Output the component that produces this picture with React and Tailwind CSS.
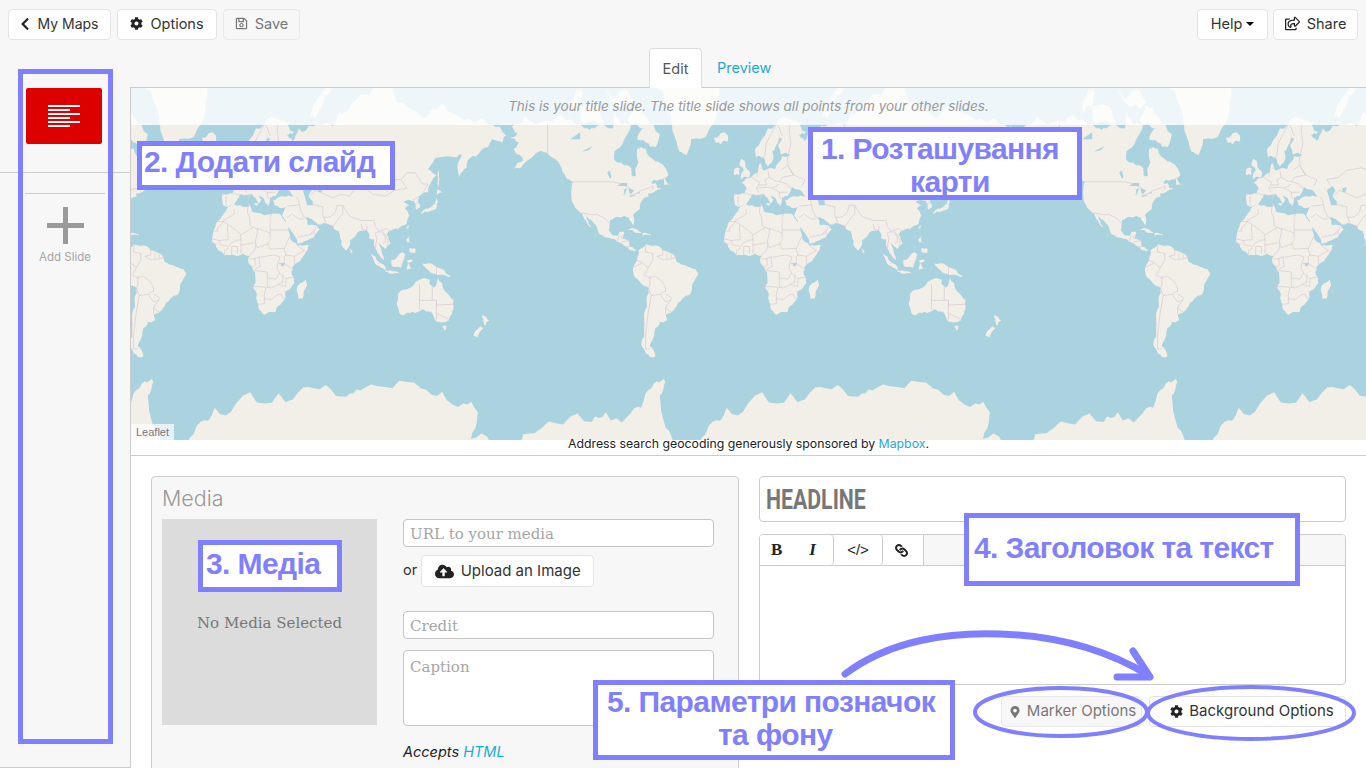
import React from "react";
import {
    FaChevronLeft,
    FaCog,
    FaRegSave,
    FaRegShareSquare,
    FaCloudUploadAlt,
    FaMapMarkerAlt,
    FaLink,
} from "react-icons/fa";

// lon/lat outlines, projected to web mercator below
const LAND = [
    [[-168,66],[-162,67],[-166,68.5],[-157,71],[-141,70],[-128,70],[-115,68],[-108,68],[-95,68],[-94,72],[-88,69],[-82,69],[-87,65],[-94,61],[-94,58],[-88,56.5],[-82,55],[-82,52],[-79,51.5],[-79,55],[-77,57],[-78,62],[-72,62],[-66,58],[-62,57],[-56,52],[-60,50],[-66,50],[-70,47],[-65,48.5],[-64,46],[-61,46],[-66,44],[-70,43.5],[-70,41.5],[-74,40.5],[-76,37],[-76,35],[-81,31],[-80,27],[-80.5,25],[-82,27],[-84,30],[-89,30],[-94,29.5],[-97,28],[-98,22],[-95,18.5],[-91,18.5],[-90,21],[-87,21],[-88,16],[-84,15.5],[-83.5,11],[-80,9],[-77.5,8.5],[-80,7.5],[-83,8.5],[-86,11],[-91,14],[-95,16],[-100,17],[-105,20],[-106,23],[-112,29],[-114.5,31.5],[-112,26],[-110,23],[-113,26],[-117,32.5],[-121,35],[-124,40],[-124,47],[-123,49],[-128,51],[-131,55],[-135,58],[-140,60],[-147,61],[-152,59],[-158,56.5],[-165,54.5],[-158,58],[-162,60],[-165,62],[-161,64]],
    [[-77,8],[-72,12],[-68,11],[-62,10.5],[-60,8],[-52,5],[-50,0],[-44,-2.5],[-37,-5],[-35,-8],[-39,-15],[-40,-21],[-45,-24],[-48.5,-27],[-52,-32],[-58,-35],[-57,-38],[-62,-39],[-65,-42],[-66,-46],[-69,-51],[-65,-55],[-72,-54],[-75,-50],[-73,-42],[-73,-37],[-71,-30],[-70,-18],[-76,-14],[-81,-6],[-80,-2],[-78,2]],
    [[-6,35.8],[3,37],[10,37.3],[11,33.5],[15,32.5],[20,31],[25,32],[32,31],[34,28],[37,21],[39,15],[43,11.5],[51,12],[48,5],[40,-3],[39,-8],[41,-15],[35,-20],[35,-24],[32.5,-27],[28,-33],[20,-34.8],[18,-33],[15,-27],[12,-18],[13.5,-10],[9,-1],[9.5,4],[5,6],[-4,5],[-8,4.5],[-13,9],[-17,14.5],[-16,20],[-13,27.5],[-9.5,31]],
    [[-9,37],[-9.5,43],[-2,43.5],[-1,46],[-4.5,48.5],[2,51],[7,53.5],[8.5,57],[11,54],[19,54.5],[21,57],[24,59.5],[30,60],[23,60],[21,63],[25,65.5],[22,65.5],[17,61],[18,59],[14,55.5],[11,59],[5.5,59],[5,62],[14,68],[25,71],[31,70],[41,67],[35,66.5],[40,64.5],[44,68],[54,68.5],[60,69],[68,68.5],[73,72],[80,73],[90,75.5],[104,77.5],[113,74],[130,71],[140,72.5],[160,70],[170,70],[180,69],[180,65],[177,62.5],[170,60],[163,58],[162,55],[156.5,51],[156,57],[163,62],[155,59],[142,59],[135,54.5],[141,52],[135,44],[130,42.5],[128,40],[129.5,36],[126.5,34.5],[125,39.5],[121,40],[118,39],[122,37],[119,35],[122,31],[120,26],[114,22.5],[108,21.5],[106,19],[109,13],[105,9],[100.5,13.5],[103,5],[104,1.5],[100,6],[98,10],[97,16],[94,16],[92,22],[87,21.5],[80,15],[80,12],[77.5,8],[73,17],[72.5,21],[67,25],[57,25.5],[56,27],[50,30],[48,30],[51,25],[56,25],[59,22.5],[55,17],[45,13],[43,13],[39,21],[35,28],[32.5,31],[35,36],[27,37],[26,40],[29,41],[36,42],[41,41.5],[37,45],[31,46.5],[28,42],[24,40.5],[23,36.5],[19.5,41],[13,45.5],[18,40],[16,38],[11,43],[3.5,43],[0,39],[-2,36.7],[-5.5,36]],
    [[-180,65],[-173,64],[-170,66],[-180,69]],
    // greenland and arctic
    [[-73,78],[-60,76],[-54,70],[-51,65],[-48,61],[-43,60],[-40,65],[-27,68],[-22,71],[-20,76],[-20,81],[-35,83.5],[-60,82]],
    [[-80,73.5],[-72,71],[-62,66.5],[-65,62.5],[-72,64],[-78,65],[-73,68],[-85,70]],
    [[-118,73],[-105,73],[-101,69.5],[-115,69],[-118,70]],
    [[-125,74],[-116,76],[-118,73],[-125,71.5]],
    [[-92,81],[-70,83],[-62,82],[-78,78],[-88,76.5]],
    [[-100,76],[-90,76],[-80,74],[-95,74]],
    [[-59,51],[-53,47],[-59,47.5]],
    [[-24,65.5],[-14,66],[-14,64.5],[-19,63.5],[-23,64]],
    [[11,79],[20,80],[27,78],[16,76.5]],
    [[52,71],[56,74],[68,77],[58,72],[56,70.5]],
    // caribbean
    [[-85,22],[-80,23],[-74,20],[-78,20],[-82,22]],
    [[-74,19.8],[-69,19.5],[-68.5,18.3],[-74,18]],
    // british isles
    [[-5,50],[1,51],[1.5,53],[-2,56],[-2,57.5],[-5,58.5],[-6,56],[-3,54],[-5,52]],
    [[-10,52],[-6,52],[-6,55],[-10,54]],
    [[9,41],[9.5,43],[8.5,39]],
    [[12.5,38],[15.5,38],[15,36.7]],
    // asia islands
    [[130,32],[131,34],[136,35.5],[140,38],[141,41],[142,39],[141,35.5],[136,33.5]],
    [[140,42],[145,43.5],[142,45.5]],
    [[142,46],[143,50],[142.5,54],[142,50]],
    [[120,22],[121.5,24],[122,25],[120,24]],
    [[120,16],[122,18.5],[122,14],[124,13],[120,14]],
    [[122,10],[126,9.5],[126,6],[122,7]],
    [[95,5.5],[98,4],[104,-2],[106,-6],[102,-4],[97,1]],
    [[105,-6.5],[112,-6.5],[115,-8],[108,-8]],
    [[109,1],[113,3],[117,7],[119,5],[117.5,1],[116,-4],[110,-3]],
    [[120,1],[125,1.5],[121,-1],[123,-5],[120,-5.5]],
    [[131,-1],[138,-1.5],[145,-5],[151,-10.5],[143,-9],[138,-8],[133,-4]],
    [[80,9.5],[82,7.5],[80.5,6]],
    // oceania
    [[114,-22],[122,-18],[126,-14],[130,-12],[136,-12],[136,-15],[140,-17.5],[142,-11],[146,-19],[153,-26],[153,-31],[150,-37.5],[146,-39],[140,-38],[137,-33],[131,-31.5],[124,-33],[118,-35],[115,-34]],
    [[145,-41],[148,-41],[147,-43.5]],
    [[173,-35],[178,-38],[175,-41],[174,-38]],
    [[172,-41],[174,-42],[170,-46.5],[167,-46]],
    [[44,-16],[49,-12],[50,-16],[47,-25],[44,-25],[43,-21]],
    // antarctica
    [[-180,-78],[-150,-76],[-130,-74.5],[-110,-74],[-100,-72],[-85,-73],[-75,-71],[-68,-66],[-60,-63.5],[-58,-64],[-62,-68],[-60,-73],[-50,-78],[-35,-78],[-25,-74],[-15,-71],[0,-70],[20,-70],[40,-69],[55,-66],[70,-68],[80,-67.5],[90,-66],[110,-66],[130,-66],[145,-67],[160,-70],[170,-72],[165,-77],[180,-78],[180,-86],[-180,-86]],
];

const LAKES = [
    [[-92,47],[-85,47],[-85,48.5],[-89,48.5]],
    [[-87.5,42],[-86,44],[-85,46],[-87,45.5]],
    [[-84,46],[-80,45],[-82,43],[-83.5,44]],
    [[-83,42],[-79,42.8],[-79,42.4],[-82,41.5]],
    [[-80,43.3],[-76,44],[-76,43.3]],
    [[-125,65],[-118,67],[-118,65]],
    [[-117,61],[-109,63],[-112,61.5]],
    [[-99,53],[-97,54],[-96,51],[-97,50.5]],
    [[47,45],[51,47],[53,45],[51,42],[54,39],[54,37],[50,37],[49,40]],
    [[58,46],[61,46.5],[60,44],[58,44]],
    [[31.5,-1],[34,-0.5],[34,-2.5],[32,-3]],
    [[104,52],[108,54],[110,55.5],[106,52]],
];

const BORDERS = [
    [[-123,49],[-95,49],[-89,48],[-83,46],[-83,42],[-79,43],[-75,45],[-70,46],[-67,47],[-67,45]],
    [[-141,70],[-141,60],[-135,58]],
    [[-117,32.5],[-108,31.5],[-106,31.7],[-101,29.5],[-97,26]],
    [[-92,14.5],[-91,17.5],[-89,18],[-88.5,16]],
    [[-89,14],[-83,15]],
    [[-86,11],[-83.5,11]],
    [[-1.5,35],[-1,32],[-8.7,28],[-8.7,27.3],[-13,27.5]],
    [[-8.7,27.3],[-4.8,25],[1,21],[3.3,19],[4,19],[12,23.5]],
    [[-13,21.3],[-17,21.3]],
    [[-13,21.3],[-13,23],[-8.7,27.3]],
    [[-6,25],[-5.5,15.5],[-12,15],[-16.5,16]],
    [[8.5,37],[8,33],[9.5,30],[10,24.5],[12,23.5],[15,23],[24,20],[24,30],[25,32]],
    [[24,22],[37,22]],
    [[15,23],[15,20],[13.5,14],[14,12.5],[15,10],[24,13]],
    [[24,20],[24,15],[22,13],[24,9],[34,9.5],[36,14],[38,18]],
    [[3.3,19],[3.5,15.5],[0,15],[-3,13.5],[-5,11],[-11,12],[-12,15]],
    [[3.5,6],[3.5,15.5]],
    [[3.5,11.7],[13.5,13.5]],
    [[9,4.5],[13,8],[14,12.5]],
    [[-3,5],[-3,11],[1,11],[1,6]],
    [[-8,4.5],[-8,8],[-5,10]],
    [[-13,12.5],[-16.5,12.5]],
    [[13,2],[16,3.5],[18,3.5],[27,5],[31,3.5],[29.5,-1],[29,-4.5],[30.5,-8],[28,-12],[22,-11],[22,-7],[13,-6]],
    [[9.5,2.2],[13,2.3],[14,-2],[11,-4]],
    [[16,3.5],[17,-3],[13,-5]],
    [[12,-17],[23,-17.5],[25,-18]],
    [[22,-11],[22,-16],[23,-17.5]],
    [[20,-22],[20,-28],[16.5,-28.5]],
    [[20,-22],[21,-18]],
    [[20,-25],[25,-25.5],[29,-22.5],[32,-22],[33,-25]],
    [[25,-18],[30,-15.5],[33,-14],[33,-9.5],[30.5,-8]],
    [[34,-1],[37.5,-3.5],[39,-4.5]],
    [[34,-1],[30,-1]],
    [[40.5,-10.5],[35,-11.5],[33,-9.5]],
    [[35,-11.5],[35,-17],[30,-15.5]],
    [[41,-1.5],[41,4],[35,5],[34,4],[34,-1]],
    [[41,4],[48,8],[43,11.5]],
    [[35,5],[34,9.5]],
    [[-72,11.5],[-72,7],[-67,6],[-67,1.5],[-70,-4]],
    [[-78.8,1.4],[-75,0],[-70,-4]],
    [[-80,-3.5],[-75,-1]],
    [[-70,-4],[-73,-9],[-70,-11]],
    [[-69,-11],[-69,-16],[-70,-18]],
    [[-70,-18],[-68,-23],[-70,-33],[-72,-45],[-72,-52],[-69,-52]],
    [[-70,-11],[-65,-10],[-60,-14],[-58,-18],[-58,-20]],
    [[-58,-20],[-62,-22],[-58,-27],[-54.5,-26],[-54,-24],[-58,-22]],
    [[-68,-23],[-62,-22]],
    [[-58,-34],[-58,-30.5],[-53.5,-33.5]],
    [[-54.5,-26],[-58,-30.5]],
    [[-60,8],[-60,5],[-64,4],[-60,1.5],[-52,2.5],[-51.5,4]],
    [[-57,6],[-57,2]],
    [[-54,5.5],[-54,2.3]],
    [[-2,43.3],[3,42.5]],
    [[-7,42],[-7,37]],
    [[2.5,51],[6,49.5],[8,49],[7.5,47.5],[6,46],[7.5,44]],
    [[14,54],[15,51],[19,49.5],[22.5,49]],
    [[8.5,55],[10,54.8]],
    [[7.5,47.5],[13,47.5],[12,50],[15,51]],
    [[7,46],[13.5,46.5],[17,46],[22,44],[22.5,41],[26,41]],
    [[24,51],[22.5,49],[27,48],[30,46]],
    [[24,51],[32,52],[28,56],[23,54]],
    [[28,60],[28,56],[32,52],[40,50],[38,47]],
    [[28,60],[30,63],[29,69],[26,70]],
    [[11.5,59],[13,64],[20,69]],
    [[24,66],[21,69]],
    [[22,44],[28,44]],
    [[17,46],[22,48]],
    [[6,51],[7,53]],
    [[36,36.5],[42,37],[44.5,37.5],[44,40],[42,41.5]],
    [[44.5,37.5],[46,33],[48,30]],
    [[48,29],[44,29],[39,32],[36,29.5]],
    [[43,17],[52,19],[55,22]],
    [[52,19],[55,20],[56,24]],
    [[61,25],[63,27],[61,31],[61,36],[54,37.5]],
    [[61,30],[66,30],[70,33],[71,37],[75,37]],
    [[52,42],[56,45],[62,43],[68,41],[74,43],[80,42],[87,49]],
    [[50,47],[47,50],[55,51],[61,54],[71,55],[77,54],[87,49]],
    [[87,49],[98,52],[107,50],[116,50],[120,46],[112,45],[105,42],[96,43],[91,46],[87,49]],
    [[116,50],[120,53],[126,53],[131,48],[135,48],[131,43]],
    [[124.5,40],[130.5,42.5]],
    [[126,38],[128.5,38.5]],
    [[75,37],[79,32],[81,30],[88,28],[97,28],[98,24],[101,21],[106,23],[108,21.5]],
    [[68,24],[71,28],[75,32],[75,37]],
    [[88,26],[89,22],[92,22],[92,25]],
    [[98,10],[99,16],[98,20],[101,21]],
    [[101,21],[105,18],[105,14],[103,13]],
    [[102,22],[105,19],[107,15],[106,11]],
    [[129,-15],[129,-31.5]],
    [[138,-16.5],[138,-26],[129,-26]],
    [[141,-26],[141,-38]],
    [[138,-26],[141,-26],[141,-29],[153,-28.5]],
    [[141,-34],[150,-37.5]],
    [[141,-2.5],[141,-9]],
];

// small seeded wobble so the coasts aren't straight segments
let seed = 7;
function rand() {
    seed = (seed * 16807) % 2147483647;
    return seed / 2147483647 - 0.5;
}

function roughen(points, rounds) {
    let out = points;
    for (let r = 0; r < rounds; r++) {
        const next = [];
        out.forEach((a, i) => {
            const b = out[(i + 1) % out.length];
            next.push(a);
            if (Math.abs(a[0]) === 180 && Math.abs(b[0]) === 180) return;
            const dx = b[0] - a[0];
            const dy = b[1] - a[1];
            const k = rand() * 0.3;
            next.push([(a[0] + b[0]) / 2 - dy * k, (a[1] + b[1]) / 2 + dx * k]);
        });
        out = next;
    }
    return out;
}

function toPath(points, close) {
    const d = points.map(([lon, lat], i) => {
        const x = 492 + ((lon + 180) / 360) * 512;
        const y = 262 - 81.487 * Math.log(Math.tan(Math.PI / 4 + (lat * Math.PI) / 360));
        return `${i ? "L" : "M"}${x.toFixed(1)} ${y.toFixed(1)}`;
    });
    return d.join("") + (close ? "Z" : "");
}

const landPath = LAND.map((p) => toPath(roughen(p, 2), true)).join("");
const lakePath = LAKES.map((p) => toPath(p, true)).join("");
const borderPath = BORDERS.map((p) => toPath(p, false)).join("");

function WorldMap() {
    return (
        <svg viewBox="131 88 1235 352" className="block w-full h-full bg-[#abd2df]">
            <defs>
                <g id="world">
                    <path d={landPath} fill="#f2efe9" />
                    <path d={lakePath} fill="#abd2df" />
                    <path d={borderPath} fill="none" stroke="#d3c2d0" strokeWidth="0.6" />
                </g>
            </defs>
            <use href="#world" x="-512" />
            <use href="#world" />
            <use href="#world" x="512" />
        </svg>
    );
}

function TopButton({ icon, label, disabled, className, children }) {
    return (
        <button
            className={`h-[31px] pb-[2px] flex items-center justify-center gap-[7px] rounded border text-[14.5px] ${className} ${
                disabled
                    ? "border-[#e9e9e9] bg-[#f7f7f7] text-[#777]"
                    : "border-[#e4e4e4] bg-white text-[#333]"
            }`}
        >
            {icon}
            {label}
            {children}
        </button>
    );
}

function Field({ placeholder, className }) {
    return (
        <div
            className={`bg-white border border-[#c4c4c4] rounded px-[6px] font-['DejaVu_Serif',serif] text-[15px] text-[#a5a5a5] ${className}`}
        >
            {placeholder}
        </div>
    );
}

function Callout({ className, children }) {
    return (
        <div
            className={`absolute border-[5px] border-[#8080ff] bg-white text-[#8080ff] font-['Liberation_Sans',sans-serif] font-bold text-left text-[30px] tracking-[-0.6px] whitespace-nowrap ${className}`}
        >
            {children}
        </div>
    );
}

export default function App() {
    return (
        <div className="relative w-[1366px] h-[768px] overflow-hidden bg-[#f7f7f7] font-['Inter',sans-serif] text-[#333]">
            {/* Toolbar */}
            <div className="h-[48px] pt-[9px] px-2 flex justify-between">
                <div className="flex gap-[6px]">
                    <TopButton className="w-[103px] !gap-[6px] !text-[14px] pr-[3px]" icon={<FaChevronLeft className="text-[14px] text-[#222]" />} label="My Maps" />
                    <TopButton className="w-[100px]" icon={<FaCog className="text-[13px] text-[#222]" />} label="Options" />
                    <TopButton className="w-[77px]" icon={<FaRegSave className="text-[13px]" />} label="Save" disabled />
                </div>
                <div className="flex gap-[5px]">
                    <TopButton className="w-[71px] !gap-[4px]" label="Help">
                        <span className="border-x-[4px] border-x-transparent border-t-[4px] border-t-black" />
                    </TopButton>
                    <TopButton className="w-[85px]" icon={<FaRegShareSquare className="text-[15px] text-[#222]" />} label="Share" />
                </div>
            </div>

            {/* Tabs */}
            <div className="h-[40px] ml-[130px] pl-[519px] flex text-[14.5px] border-b border-[#cccccc]">
                <div className="w-[53px] h-[40px] flex items-center justify-center bg-white border border-b-0 border-[#dddddd] rounded-t text-[#555]">
                    Edit
                </div>
                <div className="ml-[15px] h-[39px] flex items-center text-[#1fa9cf]">Preview</div>
            </div>

            <div className="flex h-[680px]">
                {/* Slide list */}
                <aside className="w-[131px] shrink-0 border-r border-b border-[#cccccc] flex flex-col">
                    <div className="h-[85px] border-b border-[#cccccc] pl-[26px]">
                        <div className="w-[76px] h-[56px] bg-[#dd0000] rounded-[2px] flex flex-col items-start justify-center pl-[22px] gap-[2.5px]">
                            <span className="w-[32px] h-[1.5px] bg-white" />
                            <span className="w-[22px] h-[1.5px] bg-white" />
                            <span className="w-[32px] h-[1.5px] bg-white" />
                            <span className="w-[22px] h-[1.5px] bg-white" />
                            <span className="w-[32px] h-[1.5px] bg-white" />
                            <span className="w-[22px] h-[1.5px] bg-white" />
                        </div>
                    </div>
                    <div className="mt-[20px] mx-[25px] border-t border-[#cccccc] flex flex-col items-center pt-[13px]">
                        <svg width="37" height="37" viewBox="0 0 37 37">
                            <rect x="16" y="0" width="5" height="37" fill="#9a9a9a" />
                            <rect x="0" y="16" width="37" height="5" fill="#9a9a9a" />
                        </svg>
                        <span className="mt-[5px] text-[11.5px] text-[#a5a5a5]">Add Slide</span>
                    </div>
                </aside>

                <main className="flex-1 min-w-0 bg-white flex flex-col">
                    {/* Map */}
                    <div className="relative h-[352px] shrink-0">
                        <WorldMap />
                        <div className="absolute top-0 inset-x-0 h-[37px] bg-white/80 flex items-center justify-center italic text-[13.5px] text-[#999]">
                            This is your title slide. The title slide shows all points from your other slides.
                        </div>
                        <div className="absolute left-0 bottom-0 h-[16px] px-[5px] bg-white/70 text-[11px] leading-[16px] text-[#777] font-['Liberation_Sans',sans-serif]">
                            Leaflet
                        </div>
                    </div>
                    <div className="relative h-[16px] shrink-0 border-b border-[#cccccc] text-center text-[12.3px] leading-[8px] text-[#222]">
                        Address search geocoding generously sponsored by <span className="text-[#1fa9cf]">Mapbox</span>.
                    </div>

                    {/* Editor */}
                    <div className="flex-1 flex pl-[20px] pr-[20px] pt-[20px] gap-[20px] items-start">
                        <section className="w-[588px] h-[320px] shrink-0 border border-[#cccccc] rounded bg-[#f7f7f7] px-[10px]">
                            <h2 className="h-[42px] pt-[5px] text-[21.5px] font-light text-[#999]">Media</h2>
                            <div className="flex">
                                <div className="w-[215px] h-[206px] bg-[#dcdcdc] pt-[93px] text-center font-['DejaVu_Serif',serif] text-[15px] text-[#777]">
                                    No Media Selected
                                </div>
                                <div className="ml-[26px] w-[311px] flex flex-col">
                                    <Field placeholder="URL to your media" className="h-[28px] leading-[28px]" />
                                    <div className="mt-[8px] flex items-center gap-[4px] text-[14.5px]">
                                        <span className="-mt-[2px]">or</span>
                                        <button className="h-[32px] w-[173px] flex items-center justify-center gap-[7px] bg-white border border-[#e4e4e4] rounded text-[15px] text-[#333]">
                                            <FaCloudUploadAlt className="text-[19px] text-[#222]" />
                                            Upload an Image
                                        </button>
                                    </div>
                                    <Field placeholder="Credit" className="mt-[24px] h-[28px] leading-[28px]" />
                                    <Field placeholder="Caption" className="mt-[11px] h-[76px] pt-[5px]" />
                                    <p className="mt-[15px] italic text-[14.5px] text-[#222]">
                                        Accepts <span className="text-[#1fa9cf]">HTML</span>
                                    </p>
                                </div>
                            </div>
                        </section>

                        <section className="flex-1 min-w-0 flex flex-col">
                            <div className="h-[46px] border border-[#cccccc] rounded bg-white pl-[6px] pt-[2px] flex items-center">
                                <span className="origin-left scale-x-[0.76] font-['Roboto',sans-serif] font-bold text-[28px] text-[#777]">
                                    HEADLINE
                                </span>
                            </div>
                            <div className="mt-[12px] h-[151px] border border-[#cccccc] rounded bg-white overflow-hidden">
                                <div className="h-[31px] bg-[#f7f7f7] border-b border-[#cccccc] flex text-[#222]">
                                    <div className="w-[74px] bg-white border-r border-[#cccccc] rounded-r flex items-center font-['Liberation_Serif',serif] text-[17px]">
                                        <b className="ml-[11px]">B</b>
                                        <i className="ml-[27px] font-bold">I</i>
                                    </div>
                                    <div className="w-[49px] bg-white border-r border-[#cccccc] rounded-r flex items-center justify-center font-['Liberation_Sans',sans-serif] text-[15px]">
                                        {"</>"}
                                    </div>
                                    <div className="w-[41px] bg-white border-r border-[#cccccc] flex items-center justify-center pr-[3px]">
                                        <FaLink className="text-[13px] rotate-90" />
                                    </div>
                                </div>
                            </div>
                            <div className="mt-[11px] flex justify-end gap-[7px]">
                                <button className="h-[31px] w-[141px] pl-[2px] flex items-center justify-center gap-[6px] border border-[#e9e9e9] rounded bg-[#f7f7f7] text-[15px] text-[#777]">
                                    <FaMapMarkerAlt className="text-[12px]" />
                                    Marker Options
                                </button>
                                <button className="h-[31px] w-[197px] pl-[9px] flex items-center justify-center gap-[6px] border border-[#e4e4e4] rounded bg-white text-[15px] text-[#333]">
                                    <FaCog className="text-[13px] text-[#222]" />
                                    Background Options
                                </button>
                            </div>
                        </section>
                    </div>
                </main>
            </div>

            {/* Annotations drawn over the screenshot */}
            <div className="absolute left-[18px] top-[69px] w-[95px] h-[675px] border-[5px] border-[#8080ff]" />
            <Callout className="left-[808px] top-[127px] w-[274px] h-[73px] leading-[33px] overflow-hidden">
                <span className="block ml-[8px]">1. Розташування</span>
                <span className="block ml-[97px]">карти</span>
            </Callout>
            <Callout className="left-[137px] top-[141px] w-[258px] h-[49px] leading-[32px] pl-[2px]">
                2. Додати слайд
            </Callout>
            <Callout className="left-[198px] top-[540px] w-[144px] h-[52px] leading-[38px] pl-[3px]">
                3. Медіа
            </Callout>
            <Callout className="left-[964px] top-[513px] w-[336px] h-[73px] leading-[60px] pl-[5px]">
                4. Заголовок та текст
            </Callout>
            <Callout className="left-[593px] top-[680px] w-[362px] h-[80px] leading-[33px]">
                <span className="block ml-[9px]">5. Параметри позначок</span>
                <span className="block ml-[120px]">та фону</span>
            </Callout>

            <svg className="absolute inset-0 pointer-events-none" width="1366" height="768" fill="none" stroke="#8080ff">
                <path d="M845 674C890 640 950 632 1000 634C1060 636 1110 652 1148 675" strokeWidth="7" strokeLinecap="round" />
                <path d="M1133 651L1150 677L1117 677" strokeWidth="7" strokeLinecap="round" strokeLinejoin="round" />
                <ellipse cx="1061" cy="712" rx="86" ry="24" strokeWidth="4" />
                <ellipse cx="1251" cy="713" rx="103" ry="26" strokeWidth="4" />
            </svg>
        </div>
    );
}
